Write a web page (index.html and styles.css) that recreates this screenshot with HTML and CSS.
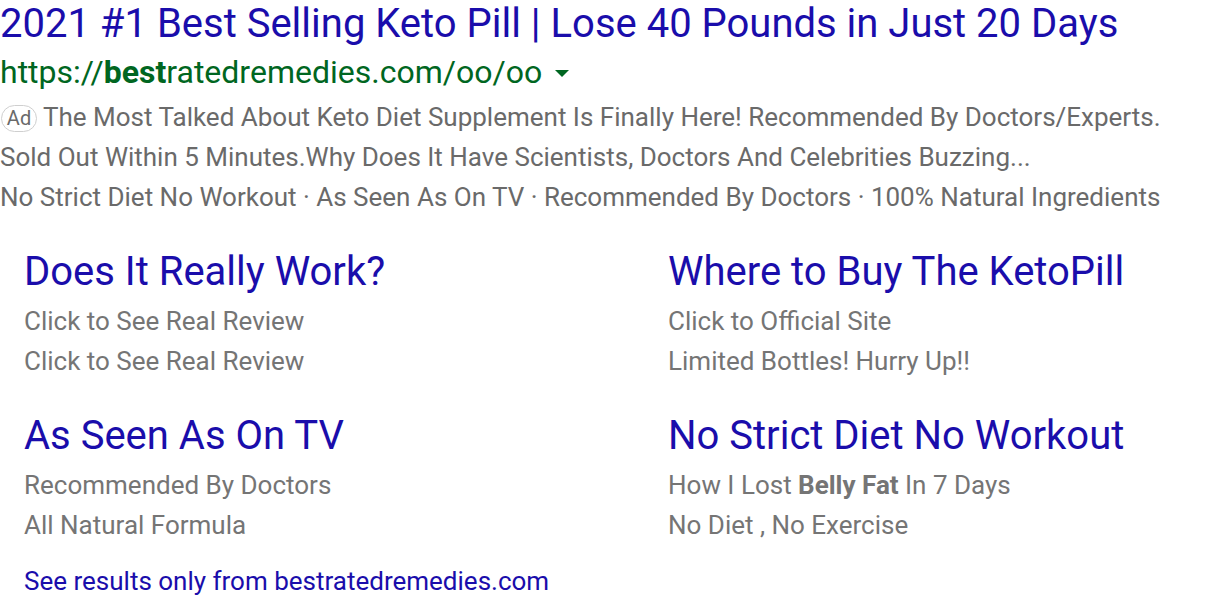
FILE: index.html
```html
<!DOCTYPE html>
<html>
<head>
<meta charset="utf-8">
<link rel="stylesheet" href="styles.css">
</head>
<body>
<div class="ad">
  <div class="title">2021 #1 Best Selling Keto Pill | Lose 40 Pounds in Just 20 Days</div>
  <div class="url">https://<b>best</b>ratedremedies.com/oo/oo<span class="caret"><svg width="14" height="7" viewBox="0 0 14 7"><path d="M0 0h14L7 7z" fill="#006621"/></svg></span></div>
  <div class="desc">
    <div class="line"><span class="badge">Ad</span> The Most Talked About Keto Diet Supplement Is Finally Here! Recommended By Doctors/Experts.</div>
    <div class="line">Sold Out Within 5 Minutes.Why Does It Have Scientists, Doctors And Celebrities Buzzing...</div>
    <div class="line">No Strict Diet No Workout · As Seen As On TV · Recommended By Doctors · 100% Natural Ingredients</div>
  </div>
  <div class="sitelinks">
    <div class="sl">
      <div class="sl-title">Does It Really Work?</div>
      <div class="sl-line">Click to See Real Review</div>
      <div class="sl-line">Click to See Real Review</div>
    </div>
    <div class="sl">
      <div class="sl-title">Where to Buy The KetoPill</div>
      <div class="sl-line">Click to Official Site</div>
      <div class="sl-line">Limited Bottles! Hurry Up!!</div>
    </div>
    <div class="sl">
      <div class="sl-title">As Seen As On TV</div>
      <div class="sl-line">Recommended By Doctors</div>
      <div class="sl-line">All Natural Formula</div>
    </div>
    <div class="sl">
      <div class="sl-title">No Strict Diet No Workout</div>
      <div class="sl-line">How I Lost <b>Belly Fat</b> In 7 Days</div>
      <div class="sl-line">No Diet , No Exercise</div>
    </div>
  </div>
  <div class="more">See results only from bestratedremedies.com</div>
</div>
</body>
</html>
```
FILE: styles.css
```css
html, body {
  margin: 0;
  padding: 0;
  background: #fff;
}
body {
  font-family: Roboto, "Liberation Sans", sans-serif;
  overflow: hidden;
}
.title {
  color: #1a0dab;
  font-size: 40px;
  line-height: 48px;
  white-space: nowrap;
}
.url {
  color: #006621;
  font-size: 32px;
  line-height: 49px;
  display: flex;
  align-items: center;
}
.url b { font-weight: 700; }
.caret {
  display: inline-flex;
  margin-left: 13px;
  margin-top: 2px;
}
.desc {
  color: #6a6a6a;
  font-size: 26px;
  line-height: 40px;
}
.line { white-space: nowrap; }
.badge {
  display: inline-block;
  box-sizing: border-box;
  height: 27px;
  width: 36px;
  border: 1px solid #cfcfcf;
  border-radius: 14px;
  font-size: 20px;
  line-height: 25px;
  text-align: center;
  color: #6a6a6a;
  margin-left: 1px;
  vertical-align: 1px;
}
.sitelinks {
  display: grid;
  grid-template-columns: 644px 1fr;
  padding-left: 24px;
  margin-top: 31px;
  row-gap: 31px;
}
.sl-title {
  color: #1a0dab;
  font-size: 40px;
  line-height: 48px;
  margin-bottom: 5px;
  white-space: nowrap;
}
.sl-line {
  color: #757575;
  font-size: 26px;
  line-height: 40px;
  white-space: nowrap;
}
.sl-line b { font-weight: 700; }
.more {
  color: #1a0dab;
  font-size: 26px;
  line-height: 40px;
  padding-left: 24px;
  margin-top: 16px;
}
```
